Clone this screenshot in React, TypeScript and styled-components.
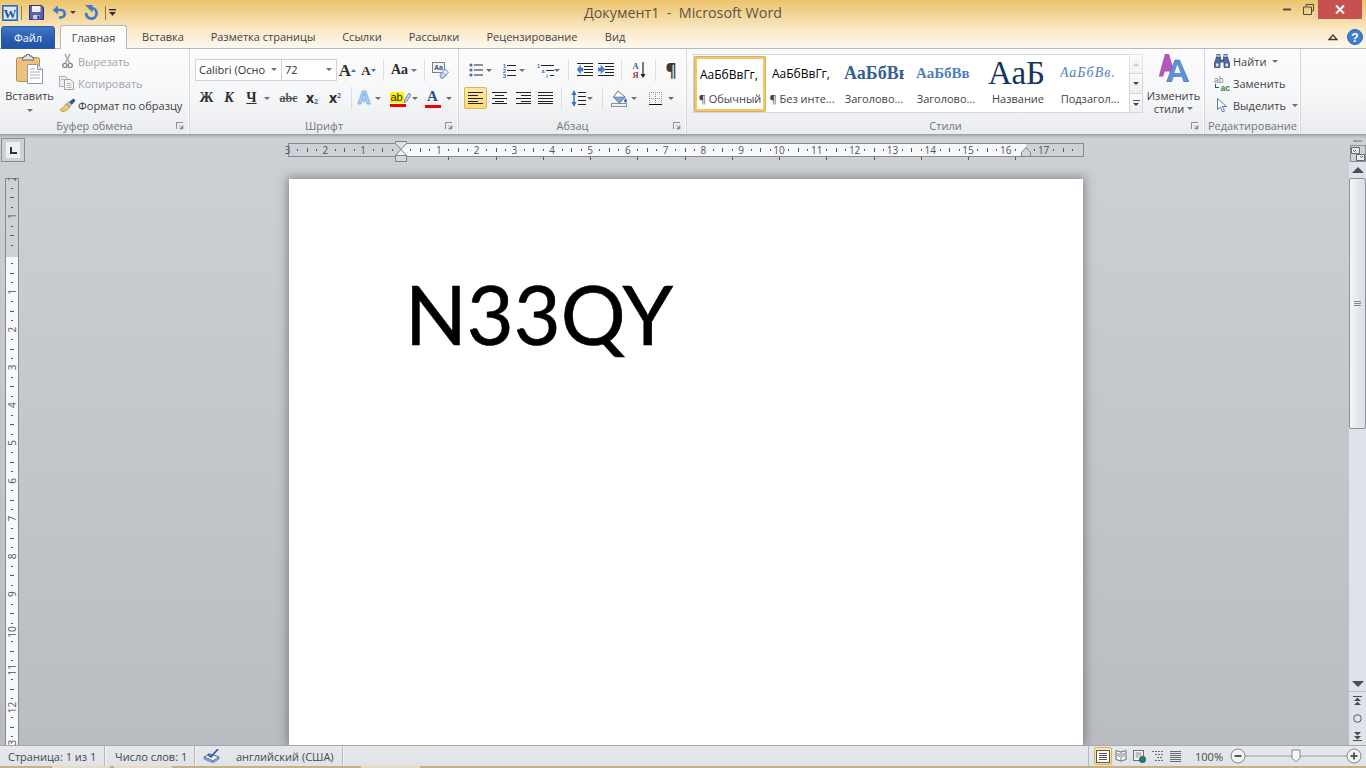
import React from 'react'
import styled, { createGlobalStyle } from 'styled-components'

const UI_FONT = `'Open Sans', 'Noto Sans', sans-serif`
const SERIF = `'Liberation Serif', serif`

const GlobalStyle = createGlobalStyle`
  html, body { margin: 0; padding: 0; overflow: hidden; background: #cdd0d4; }
  body { font: 11px ${UI_FONT}; color: #3c3f44; }
  * { box-sizing: border-box; }
  svg { display: block; flex: none; }
`

const Window = styled.div`
  width: 1366px;
  height: 768px;
  display: flex;
  flex-direction: column;
  overflow: hidden;
`

/* ---------- title bar and tabs ---------- */

const Header = styled.header`
  height: 49px;
  background: linear-gradient(180deg, #edc46c 0%, #f3d596 30%, #fae9c8 62%, #fdf9f1 100%);
`

const TitleBar = styled.div`
  height: 25px;
  display: grid;
  grid-template-columns: 1fr auto 1fr;
  align-items: start;
`

const QuickAccess = styled.div`
  display: flex;
  align-items: center;
  height: 25px;
  padding: 0 0 0 2px;
`

const QatSlot = styled.div<{ $w: number }>`
  width: ${(p) => p.$w}px;
  display: flex;
  align-items: center;
  justify-content: center;
`

const QatRule = styled.div`
  width: 1px;
  height: 14px;
  background: #8d7d5c;
`

const Title = styled.div`
  font-size: 14.3px;
  line-height: 25px;
  color: #5c5548;
  white-space: pre;
`

const WindowButtons = styled.div`
  display: flex;
  justify-content: flex-end;
  padding-right: 4px;
`

const WinButton = styled.div<{ $w: number; $close?: boolean }>`
  width: ${(p) => p.$w}px;
  height: 19px;
  display: flex;
  align-items: center;
  justify-content: center;
  background: ${(p) => (p.$close ? '#c75050' : 'transparent')};
`

const TabStrip = styled.nav`
  height: 24px;
  display: flex;
  align-items: flex-end;
  padding-left: 1px;
  border-bottom: 1px solid #b4b7bb;
`

const FileTab = styled.div`
  width: 54px;
  height: 23px;
  margin-right: 5px;
  margin-bottom: -1px;
  border-radius: 3px 3px 0 0;
  border: 1px solid #2a5a9e;
  background: linear-gradient(180deg, #3f78c8 0%, #2b5cac 55%, #1f54a8 100%);
  color: #fff;
  text-align: center;
  line-height: 22px;
`

const Tab = styled.div<{ $w: number; $active?: boolean }>`
  width: ${(p) => p.$w}px;
  height: ${(p) => (p.$active ? 24 : 23)}px;
  text-align: center;
  line-height: 23px;
  color: #3f4347;
  ${(p) =>
    p.$active &&
    `
    margin-bottom: -1px;
    border: 1px solid #b4b7bb;
    border-bottom: none;
    border-radius: 3px 3px 0 0;
    background: linear-gradient(180deg, #fffdf9 0%, #fbfbfc 100%);
  `}
`

const TabTools = styled.div`
  margin-left: auto;
  height: 23px;
  padding-right: 3px;
  display: flex;
  align-items: center;
  gap: 9px;
`

/* ---------- ribbon ---------- */

const Ribbon = styled.section`
  height: 86px;
  display: flex;
  background: linear-gradient(180deg, #fcfcfd 0%, #f6f7f8 55%, #e9ebee 100%);
  border-bottom: 1px solid #9fa3a8;
`

const Group = styled.div<{ $w: number }>`
  width: ${(p) => p.$w}px;
  display: flex;
  flex-direction: column;
  border-right: 1px solid #d6d8dc;
  box-shadow: inset -1px 0 0 #fbfbfc;
`

const GroupBody = styled.div<{ $pad?: string }>`
  height: 69px;
  display: flex;
  padding: ${(p) => p.$pad ?? '0'};
`

const GroupFooter = styled.div`
  height: 16px;
  display: grid;
  grid-template-columns: 1fr auto 1fr;
  align-items: center;
  color: #72767b;
  line-height: 16px;
`

const LauncherSlot = styled.div`
  justify-self: end;
  padding-right: 5px;
`

const Launcher = () => (
  <LauncherSlot>
    <svg width="8" height="8" viewBox="0 0 8 8">
      <path d="M.5 7V.5H7" fill="none" stroke="#8b8f94" />
      <path d="M3 3l3 3M7 3.5V7H3.5z" fill="#8b8f94" stroke="#8b8f94" strokeWidth=".7" />
    </svg>
  </LauncherSlot>
)

const Caret = styled.i<{ $dark?: boolean }>`
  display: block;
  flex: none;
  width: 0;
  height: 0;
  border-left: 3px solid transparent;
  border-right: 3px solid transparent;
  border-top: 3px solid ${(p) => (p.$dark ? '#444' : '#6d7074')};
`

const PasteBlock = styled.div`
  width: 59px;
  padding-top: 5px;
  display: flex;
  flex-direction: column;
  align-items: center;
  color: #3c3f44;
`

const BigLabel = styled.div`
  margin-top: 4px;
  line-height: 16px;
  margin-bottom: 5px;
`

const ActionList = styled.div<{ $pad?: number }>`
  padding-top: 1px;
  padding-left: ${(p) => p.$pad ?? 0}px;
  display: flex;
  flex-direction: column;
`

const ActionRow = styled.div<{ $off?: boolean }>`
  height: 22px;
  display: flex;
  align-items: center;
  color: ${(p) => (p.$off ? '#a2a5a9' : '#3c3f44')};
  white-space: nowrap;
`

const ActionIcon = styled.div<{ $w: number }>`
  width: ${(p) => p.$w}px;
  flex: none;
  display: flex;
`

const ActionCaret = styled.div`
  margin-left: 6px;
`

const ToolRows = styled.div`
  padding-top: 9px;
  display: flex;
  flex-direction: column;
  gap: 4px;
`

const ToolRow = styled.div`
  height: 24px;
  display: flex;
  align-items: center;
`

const Combo = styled.div<{ $w: number }>`
  width: ${(p) => p.$w}px;
  height: 22px;
  margin-right: -1px;
  padding: 0 4px 1px 3px;
  display: flex;
  align-items: center;
  justify-content: space-between;
  background: #fff;
  border: 1px solid #cfd2d6;
  color: #2f3236;
  white-space: nowrap;
  overflow: hidden;
`

const Tool = styled.div<{ $w: number; $gap?: number }>`
  width: ${(p) => p.$w}px;
  flex: none;
  height: 24px;
  display: flex;
  align-items: center;
  justify-content: center;
  gap: ${(p) => p.$gap ?? 3}px;
`

const ActiveTool = styled.div<{ $w: number; $h: number }>`
  width: ${(p) => p.$w}px;
  height: ${(p) => p.$h}px;
  flex: none;
  display: flex;
  align-items: center;
  justify-content: center;
  border: 1px solid #dfb35a;
  border-radius: 2px;
  background: linear-gradient(180deg, #fde8a8 0%, #fedb78 100%);
`

const Gap = styled.div<{ $w: number }>`
  width: ${(p) => p.$w}px;
  flex: none;
`

const ToolRule = styled.div`
  width: 1px;
  height: 22px;
  flex: none;
  background: #dcdee1;
`

const Glyph = styled.span<{ $size: number; $color?: string; $serif?: boolean; $bold?: boolean; $italic?: boolean; $line?: string }>`
  font-family: ${(p) => (p.$serif ? SERIF : UI_FONT)};
  font-size: ${(p) => p.$size}px;
  font-weight: ${(p) => (p.$bold ? 700 : 400)};
  font-style: ${(p) => (p.$italic ? 'italic' : 'normal')};
  color: ${(p) => p.$color ?? '#2b2d30'};
  text-decoration: ${(p) => p.$line ?? 'none'};
  line-height: 1;
`

const SubMark = styled.sub`
  font-size: 7px;
  color: #3f6fb5;
  font-weight: 700;
  vertical-align: -1px;
  line-height: 0;
`

const SupMark = styled.sup`
  font-size: 7px;
  color: #3f6fb5;
  font-weight: 700;
  vertical-align: 5px;
  line-height: 0;
`

const GlowA = styled.span`
  font: 700 18px 'Liberation Sans', sans-serif;
  color: #a9d0f2;
  -webkit-text-stroke: 0.5px #5c9ad8;
  text-shadow: 0 0 3px #a9d3f5;
  line-height: 1;
`

const ColorStack = styled.div`
  display: flex;
  flex-direction: column;
  align-items: center;
  width: 17px;
`

const ColorBar = styled.div`
  width: 16px;
  height: 3px;
  margin-top: 1px;
  background: #f00000;
`

const HighlightText = styled.span`
  font: 11px 'Liberation Sans', sans-serif;
  line-height: 11px;
  padding: 0 1px;
  background: #fff200;
  color: #222;
`

const HighlightRow = styled.div`
  display: flex;
  align-items: flex-end;
  height: 13px;
  width: 17px;
`

/* ---------- style gallery ---------- */

const Gallery = styled.div`
  margin: 5px 0 0 6px;
  width: 450px;
  height: 59px;
  display: flex;
`

const GalleryItems = styled.div`
  width: 436px;
  height: 59px;
  background: #fff;
  border: 1px solid #d3d6da;
  border-right: none;
  display: flex;
  align-items: center;
`

const StyleItem = styled.div<{ $selected?: boolean }>`
  width: 72px;
  height: 56px;
  flex: none;
  overflow: hidden;
  display: flex;
  flex-direction: column;
  align-items: center;
  color: #3f4347;
  ${(p) =>
    p.$selected &&
    `
    border: 3px solid #f3c766;
    outline: 1px solid #dcb05a;
    outline-offset: -1px;
    border-radius: 2px;
  `}
`

const Preview = styled.div<{ $selected?: boolean }>`
  height: ${(p) => (p.$selected ? 32 : 35)}px;
  width: 60px;
  overflow: hidden;
  white-space: nowrap;
  display: flex;
  align-items: center;
`

const PreviewText = styled.span<{ $f?: string; $size: number; $color?: string; $bold?: boolean; $italic?: boolean; $ls?: number }>`
  font-family: ${(p) => p.$f ?? UI_FONT};
  font-size: ${(p) => p.$size}px;
  color: ${(p) => p.$color ?? '#000'};
  font-weight: ${(p) => (p.$bold ? 700 : 400)};
  font-style: ${(p) => (p.$italic ? 'italic' : 'normal')};
  letter-spacing: ${(p) => p.$ls ?? 0}px;
`

const StyleName = styled.div`
  line-height: 16px;
  white-space: nowrap;
`

const GalleryScroll = styled.div`
  width: 14px;
  display: flex;
  flex-direction: column;
`

const GalleryButton = styled.div<{ $faded?: boolean }>`
  flex: 1;
  display: flex;
  flex-direction: column;
  gap: 2px;
  align-items: center;
  justify-content: center;
  border: 1px solid #d3d6da;
  margin-top: -1px;
  background: linear-gradient(180deg, #fbfbfc, #eceef1);
  &:first-child { margin-top: 0; }
  opacity: ${(p) => (p.$faded ? 0.6 : 1)};
`

const UpCaret = styled(Caret)`
  border-top: none;
  border-bottom: 3px solid #a7aaae;
`

const BarMark = styled.i`
  display: block;
  width: 7px;
  height: 1px;
  background: #55585c;
`

const ChangeStyles = styled.div`
  flex: 1;
  padding-top: 5px;
  display: flex;
  flex-direction: column;
  align-items: center;
  line-height: 13px;
  text-align: center;
`

const ChangeLine = styled.div`
  display: flex;
  align-items: center;
  gap: 3px;
`

const ChangeFirst = styled.div`
  margin-top: 7px;
`

/* ---------- workspace ---------- */

const Workspace = styled.main`
  flex: 1;
  min-height: 0;
  display: flex;
  background: linear-gradient(180deg, #cdd0d4 0%, #b9bcc0 100%);
  box-shadow: inset 0 3px 3px -2px rgba(60, 65, 70, 0.35);
`

const LeftRail = styled.aside`
  width: 24px;
  flex: none;
  display: flex;
  flex-direction: column;
  padding: 3px 0 0 1px;
`

const TabStopButton = styled.div`
  width: 24px;
  height: 24px;
  padding: 3px 4px;
  border: 1px solid #8a8f95;
  background: #cdd0d4;
`

const TabStopFace = styled.div`
  width: 14px;
  height: 16px;
  background: #eef0f2;
  display: flex;
  align-items: center;
  justify-content: center;
`

const VRulerBox = styled.div`
  margin: 16px 0 0 4px;
`

const RulerSvg = styled.svg`
  overflow: visible;
`

const Pane = styled.div`
  flex: 1;
  min-width: 0;
  padding: 6px 1px 0 0;
  display: flex;
  flex-direction: column;
  align-items: center;
  overflow: hidden;
`

const Page = styled.article`
  width: 794px;
  flex: 1;
  margin-top: 17px;
  padding: 83px 0 0 116px;
  background: #fff;
  box-shadow: 0 0 9px 2px rgba(70, 75, 82, 0.5);
`

const PageText = styled.div`
  font-family: Lato, sans-serif;
  font-size: 81px;
  line-height: 104px;
  color: #000;
  -webkit-text-stroke: 0.6px #000;
`

const ScrollRail = styled.aside`
  width: 17px;
  flex: none;
  display: flex;
  flex-direction: column;
  align-items: stretch;
  padding-top: 3px;
`

const RailGrip = styled.div`
  width: 9px;
  height: 2px;
  margin: 2px auto 3px;
  background: #9a9ea3;
`

const RulerToggle = styled.div`
  height: 17px;
  margin-left: 1px;
  border: 1px solid #8a8f95;
  display: flex;
  align-items: center;
  justify-content: center;
`

const RailButton = styled.div<{ $h: number; $line?: boolean }>`
  height: ${(p) => p.$h}px;
  display: flex;
  align-items: center;
  justify-content: center;
  background: #dfe2e9;
  ${(p) => p.$line && 'border-bottom: 1px solid #bfc2c7;'}
`

const Track = styled.div`
  flex: 1;
  display: flex;
  flex-direction: column;
  background: #dfe2e9;
`

const Thumb = styled.div`
  height: 251px;
  border: 1px solid #8d9298;
  border-radius: 2px;
  background: linear-gradient(90deg, #f4f5f7 0%, #e4e6eb 60%, #dcdfe5 100%);
  display: flex;
  align-items: center;
  justify-content: center;
`

const ThumbGrip = styled.div`
  width: 7px;
  height: 5px;
  border-top: 1px solid #85898e;
  border-bottom: 1px solid #85898e;
  background: linear-gradient(#85898e, #85898e) center / 100% 1px no-repeat;
`

const ArrowMark = styled.i<{ $down?: boolean }>`
  display: block;
  width: 0;
  height: 0;
  border-left: 6px solid transparent;
  border-right: 6px solid transparent;
  ${(p) => (p.$down ? 'border-top: 6px solid #4a4d52;' : 'border-bottom: 6px solid #4a4d52;')}
`

/* ---------- status bar ---------- */

const StatusBar = styled.footer`
  height: 21px;
  flex: none;
  display: flex;
  align-items: center;
  border-top: 1px solid #a4a7ac;
  background: linear-gradient(180deg, #e6e8ec 0%, #dfe2e6 100%);
  color: #45484d;
`

const StatusCell = styled.div<{ $w: number; $pad: number }>`
  width: ${(p) => p.$w}px;
  height: 20px;
  padding-left: ${(p) => p.$pad}px;
  display: flex;
  align-items: center;
  white-space: nowrap;
  border-right: 1px solid #b3b6ba;
  box-shadow: 1px 0 0 #f3f4f6;
`

const StatusRight = styled.div`
  margin-left: auto;
  display: flex;
  align-items: center;
  height: 20px;
`

const StatusRule = styled.div`
  width: 1px;
  height: 20px;
  margin-right: 5px;
  background: #b3b6ba;
`

const ViewSlot = styled.div<{ $w: number }>`
  width: ${(p) => p.$w}px;
  display: flex;
  justify-content: center;
`

const ZoomValue = styled.div`
  width: 45px;
  text-align: right;
  padding-right: 7px;
`

const TaskSliver = styled.div`
  height: 2px;
  flex: none;
  background: linear-gradient(
    90deg,
    #c7b083 0 52px,
    #e6dcc4 52px 110px,
    #c7b083 110px 114px,
    #e6dcc4 114px 172px,
    #c7b083 172px 361px,
    #e6dcc4 361px 420px,
    #c7b083 420px
  );
`

/* ---------- drawings ---------- */

const WordLogo = () => (
  <svg width="16" height="16" viewBox="0 0 16 16">
    <rect x=".5" y=".5" width="15" height="15" fill="#fff" stroke="#2f6cb8" />
    <rect x="1.5" y="1.5" width="13" height="13" fill="#dce9f7" stroke="#5f98d8" />
    <text x="8" y="13" textAnchor="middle" fontFamily="Liberation Serif" fontWeight="700" fontSize="13" fill="#1c4f9c">W</text>
  </svg>
)

const SaveIcon = () => (
  <svg width="15" height="15" viewBox="0 0 15 15">
    <path d="M.5.5h12l2 2v12H.5z" fill="#5d60ad" stroke="#2f3178" />
    <rect x="3" y="1" width="8.5" height="6" fill="#eef0fa" />
    <rect x="3.5" y="9.5" width="8" height="5" fill="#c9cbe0" stroke="#3b3d85" strokeWidth=".6" />
    <rect x="8.5" y="10.5" width="2" height="3.5" fill="#2f3178" />
  </svg>
)

const UndoIcon = () => (
  <svg width="14" height="15" viewBox="0 0 14 15">
    <path d="M4 5h5a3.5 3.5 0 0 1 0 7.5H7" fill="none" stroke="#3c7bc8" strokeWidth="2.6" />
    <path d="M6 .5v9L.5 5z" fill="#3c7bc8" />
  </svg>
)

const RedoIcon = () => (
  <svg width="14" height="15" viewBox="0 0 14 15">
    <path d="M8 3.200A5.200 5.200 0 1 1 2.200 8" fill="none" stroke="#3c7bc8" strokeWidth="2.800" />
    <path d="M1 0h7.500v7.500z" fill="#3c7bc8" />
  </svg>
)

const CustomizeIcon = () => (
  <svg width="7" height="7" viewBox="0 0 7 7">
    <rect y="0" width="7" height="1.4" fill="#2b2b2b" />
    <path d="M0 3h7L3.5 6.8z" fill="#2b2b2b" />
  </svg>
)

const PasteIcon = () => (
  <svg width="28" height="30" viewBox="0 0 28 30">
    <rect x=".5" y="3.5" width="23" height="24" rx="2" fill="#eec27c" stroke="#b58c50" />
    <path d="M8 3.5V2h2.5V.5h3V2H16v1.5h1.5V6h-11V3.5z" fill="#e3e4e6" stroke="#6b6d70" />
    <path d="M11.5 10.5h10l5 5v14h-15z" fill="#fff" stroke="#8d97a6" />
    <path d="M21.5 10.5v5h5" fill="#dfe4ea" stroke="#8d97a6" />
    <path d="M14 15h5M14 18h10M14 21h10M14 24h10" stroke="#a6aeba" />
  </svg>
)

const CutIcon = () => (
  <svg width="11" height="16" viewBox="0 0 11 16">
    <path d="M3 1l4.5 9M8 1L3.5 10" stroke="#a8abaf" strokeWidth="1.6" />
    <circle cx="2.8" cy="12.5" r="2.1" fill="none" stroke="#85888c" strokeWidth="1.4" />
    <circle cx="8.2" cy="12.5" r="2.1" fill="none" stroke="#85888c" strokeWidth="1.4" />
  </svg>
)

const CopyIcon = () => (
  <svg width="15" height="14" viewBox="0 0 15 14">
    <path d="M.5.5h6l2 2v8h-8z" fill="#eceef0" stroke="#a9acb0" />
    <path d="M5.5 3.5h6l3 3v7h-9z" fill="#f5f6f7" stroke="#a0a3a7" />
    <path d="M7.5 7.5h5M7.5 9.5h5M7.5 11.5h5M2 3.5h3" stroke="#b6b9bd" />
  </svg>
)

const BrushIcon = () => (
  <svg width="17" height="14" viewBox="0 0 17 14">
    <path d="M1 11.5C4 11 5 8 7 6l4 3c-2 2-4 4.500-8 4.500z" fill="#f0cd6a" stroke="#a48a3c" strokeWidth=".8" />
    <path d="M7.500 5.500l2-1.500 3 2.500-1.500 2z" fill="#c7cbd1" stroke="#777" strokeWidth=".6" />
    <path d="M10 4l4.500-3.500 2 2L13 6.500z" fill="#34518f" />
  </svg>
)

const GrowArrow = ({ color = '#3f6fb5', down }: { color?: string; down?: boolean }) => (
  <svg width="5" height="3" viewBox="0 0 5 3">
    <path d={down ? 'M0 0h5L2.500 3z' : 'M0 3h5L2.500 0z'} fill={color} />
  </svg>
)

const ClearFormatIcon = () => (
  <svg width="17" height="17" viewBox="0 0 17 17">
    <rect x=".5" y=".5" width="12" height="10" fill="#f4f5f7" stroke="#7d8085" />
    <text x="6.500" y="8" textAnchor="middle" fontSize="7" fontFamily="Liberation Sans" fontWeight="700" fill="#3a4c78">Aa</text>
    <path d="M8 13l5-6 3.500 3-5 6H9z" fill="#e8f0fa" stroke="#6d90bf" />
    <path d="M8 13l2.500-3 3.500 3-2.500 3H9z" fill="#bcd3ef" stroke="#6d90bf" strokeWidth=".7" />
  </svg>
)

const HighlightPen = () => (
  <svg width="7" height="10" viewBox="0 0 7 10">
    <path d="M5 0l2 2-4 6-3 2 .5-3.500z" fill="#b9c9dd" stroke="#5c7190" strokeWidth=".7" />
  </svg>
)

const Lines = ({ rows, width = 14 }: { rows: Array<[number, number]>; width?: number }) => (
  <svg width={width} height="13" viewBox={`0 0 ${width} 13`}>
    {rows.map(([x1, x2], i) => (
      <rect key={i} x={x1} y={i * (12 / (rows.length - 1)) - (i === rows.length - 1 ? 1 : 0)} width={x2 - x1} height="1" fill="#222" />
    ))}
  </svg>
)

const BulletsIcon = () => (
  <svg width="14" height="14" viewBox="0 0 14 14">
    {[2, 7, 12].map((y) => (
      <g key={y}>
        <circle cx="2" cy={y} r="1.600" fill="#3b6fb6" />
        <rect x="5" y={y - 0.5} width="9" height="1" fill="#222" />
      </g>
    ))}
  </svg>
)

const NumbersIcon = () => (
  <svg width="14" height="15" viewBox="0 0 14 15">
    {[1, 2, 3].map((n) => (
      <g key={n}>
        <text x="2.500" y={n * 5 - 0.5} textAnchor="middle" fontSize="6" fontWeight="700" fontFamily="Liberation Sans" fill="#3b6fb6">{n}</text>
        <rect x="5" y={n * 5 - 3} width="9" height="1" fill="#222" />
      </g>
    ))}
  </svg>
)

const MultiLevelIcon = () => (
  <svg width="17" height="15" viewBox="0 0 17 15">
    <text x="1.500" y="5" textAnchor="middle" fontSize="5.500" fontWeight="700" fontFamily="Liberation Sans" fill="#3b6fb6">1</text>
    <rect x="4" y="2" width="13" height="1" fill="#222" />
    <text x="6" y="10" textAnchor="middle" fontSize="5.500" fontWeight="700" fontFamily="Liberation Sans" fill="#3b6fb6">a</text>
    <rect x="9" y="7" width="8" height="1" fill="#222" />
    <text x="10" y="15" textAnchor="middle" fontSize="5.500" fontWeight="700" fontFamily="Liberation Sans" fill="#3b6fb6">i</text>
    <rect x="13" y="12" width="4" height="1" fill="#222" />
  </svg>
)

const IndentIcon = ({ increase }: { increase?: boolean }) => (
  <svg width="16" height="14" viewBox="0 0 16 14">
    <path d="M0 .5h16M7 3.500h9M7 6.500h9M7 9.500h9M0 12.500h16" stroke="#222" />
    <path
      d={increase ? 'M0 5h3V2.500L7 6.500l-4 4V8H0z' : 'M6 5H3.500V2.500L0 6.500l3.500 4V8H6z'}
      fill="#4a82cc"
      stroke="#2f5c9e"
      strokeWidth=".5"
    />
  </svg>
)

const SortIcon = () => (
  <svg width="15" height="17" viewBox="0 0 15 17">
    <text x="4.500" y="7" textAnchor="middle" fontSize="8.500" fontWeight="700" fontFamily="Liberation Serif" fill="#3b5e9a">А</text>
    <text x="4.500" y="16" textAnchor="middle" fontSize="8.500" fontWeight="700" fontFamily="Liberation Serif" fill="#a13c3c">Я</text>
    <path d="M12 0v14" stroke="#222" strokeWidth="1.200" />
    <path d="M9.500 12h5L12 16z" fill="#222" />
  </svg>
)

const LineSpacingIcon = () => (
  <svg width="15" height="17" viewBox="0 0 15 17">
    <path d="M3 3v11" stroke="#3b6fb6" strokeWidth="1.500" />
    <path d="M.5 5L3 0l2.500 5zM.5 12L3 17l2.500-5z" fill="#3b6fb6" />
    <path d="M7 2.500h8M7 6.500h8M7 10.500h8M7 14.500h8" stroke="#222" />
  </svg>
)

const ShadingIcon = () => (
  <svg width="17" height="17" viewBox="0 0 17 17">
    <path d="M7 1l7 6-5.500 6L2.500 7z" fill="#fff" stroke="#6c7077" />
    <path d="M14 7l-5.500 6-6-6z" fill="#7fa7da" stroke="#50709b" strokeWidth=".6" />
    <path d="M14.500 8s1.500 2 1.500 3a1.500 1.500 0 0 1-3 0c0-1 1.500-3 1.500-3z" fill="#3b6fb6" />
    <rect x=".5" y="13.500" width="15" height="3" fill="#eef0f3" stroke="#8c9095" />
  </svg>
)

const BordersIcon = () => (
  <svg width="13" height="13" viewBox="0 0 13 13">
    <path d="M.5 0v12M6.500 0v12M12.500 0v12M0 .5h13M0 6.500h13" stroke="#8a8d92" strokeDasharray="1 1" />
    <rect y="12" width="13" height="1" fill="#111" />
  </svg>
)

const ChangeStylesIcon = () => (
  <svg width="32" height="28" viewBox="0 0 32 28">
    <path d="M10 0h5l9 26h-5.500l-2-6H9l-2 6H1.500z" fill="#b558b8" stroke="#8e3d96" strokeWidth=".5" transform="scale(.72 .86)" />
    <path d="M17 6h4.500L31 28h-5l-1.800-5.500h-9L13.500 28h-5z" fill="#5d93d8" stroke="#3c6fb3" strokeWidth=".6" />
    <path d="M19.300 10.500L16.500 19h6z" fill="#fbfbfc" />
  </svg>
)

const BinocularsIcon = () => (
  <svg width="16" height="14" viewBox="0 0 16 14">
    <path d="M2.500 3h4v3h3V3h4l2 6v4.500H10V8H6v5.500H.5V9z" fill="#4a6ba5" stroke="#26406e" strokeWidth=".7" />
    <rect x="3" y=".5" width="3" height="3" fill="#cfd9ea" stroke="#26406e" strokeWidth=".7" />
    <rect x="10" y=".5" width="3" height="3" fill="#cfd9ea" stroke="#26406e" strokeWidth=".7" />
    <rect x="2" y="9.500" width="2.500" height="3" fill="#dce5f3" />
    <rect x="11.500" y="9.500" width="2.500" height="3" fill="#dce5f3" />
  </svg>
)

const ReplaceIcon = () => (
  <svg width="17" height="15" viewBox="0 0 17 15">
    <text x="0" y="6.500" fontSize="8.500" fontFamily="Liberation Sans" fill="#7f8287">ab</text>
    <text x="6.500" y="14.500" fontSize="8.500" fontWeight="700" fontFamily="Liberation Sans" fill="#3f7d3b">ac</text>
    <path d="M1.500 8v3.500H5" fill="none" stroke="#24509a" strokeWidth="1.100" />
  </svg>
)

const SelectIcon = () => (
  <svg width="11" height="15" viewBox="0 0 11 15">
    <path d="M.5.500v11l3-2.500 2 5 2-1-2-4.500h4z" fill="#fff" stroke="#5a7bab" />
  </svg>
)

const CheckBookIcon = () => (
  <svg width="17" height="14" viewBox="0 0 17 14">
    <path d="M1 8l6-3 9 3-6 4z" fill="#eef1f7" stroke="#4d6da6" />
    <path d="M1 8v2l9 4 6-4V8l-6 4z" fill="#8ea8d6" stroke="#4d6da6" strokeWidth=".6" />
    <path d="M5 5l3 3 7-8" fill="none" stroke="#2f5fa8" strokeWidth="1.800" />
  </svg>
)

const Chevrons = () => (
  <svg width="10" height="8" viewBox="0 0 10 8">
    <path d="M1 6.500L5 2l4 4.500H1z" fill="none" stroke="#3a3a3a" strokeWidth="1.300" />
  </svg>
)

const HelpIcon = () => (
  <svg width="16" height="16" viewBox="0 0 16 16">
    <circle cx="8" cy="8" r="7.500" fill="#3d7fd0" stroke="#2b64ad" />
    <text x="8" y="12.500" textAnchor="middle" fontFamily="Liberation Sans" fontWeight="700" fontSize="12" fill="#fff">?</text>
  </svg>
)

const PrintLayoutIcon = () => (
  <svg width="14" height="13" viewBox="0 0 14 13">
    <rect x=".5" y=".5" width="13" height="12" fill="#fdfdfd" stroke="#55585d" />
    <path d="M3 3.500h8M3 5.500h8M3 7.500h8M3 9.500h8" stroke="#55585d" />
  </svg>
)

const ReadingIcon = () => (
  <svg width="12" height="13" viewBox="0 0 12 13">
    <path d="M6 2L1 .5v9L6 11l5-1.500v-9z" fill="#f6f7f9" stroke="#6a6d72" />
    <path d="M6 2v9M2 3.500l3 .8M2 5.500l3 .8M7 4.300l3-.8M7 6.300l3-.8" stroke="#6a6d72" strokeWidth=".8" />
  </svg>
)

const WebIcon = () => (
  <svg width="13" height="13" viewBox="0 0 13 13">
    <rect x=".5" y=".5" width="10" height="10" fill="#f6f7f9" stroke="#6a6d72" />
    <path d="M2.500 3h6M2.500 5h6M2.500 7h3" stroke="#6a6d72" strokeWidth=".8" />
    <circle cx="9.500" cy="9.500" r="3.200" fill="#2f7d4f" stroke="#1d5a9c" strokeWidth=".8" />
  </svg>
)

const OutlineIcon = () => (
  <svg width="11" height="11" viewBox="0 0 11 11">
    <path d="M0 .5h11M3 3.500h8M5 6.500h6M3 9.500h8" stroke="#6a6d72" strokeDasharray="2 1" />
  </svg>
)

const DraftIcon = () => (
  <svg width="11" height="11" viewBox="0 0 11 11">
    <path d="M0 .5h11M0 2.500h11M0 4.500h11M0 6.500h11M0 8.500h11M0 10.500h11" stroke="#6a6d72" />
  </svg>
)

const ZoomSlider = () => (
  <svg width="132" height="18" viewBox="0 0 132 18">
    <path d="M15 9h102" stroke="#9da1a6" />
    <circle cx="8" cy="9" r="7" fill="#f3f4f6" stroke="#7f8388" />
    <rect x="4.500" y="8" width="7" height="2" fill="#55585d" />
    <circle cx="124" cy="9" r="7" fill="#f3f4f6" stroke="#7f8388" />
    <path d="M120.500 9h7M124 5.500v7" stroke="#55585d" strokeWidth="2" />
    <path d="M62 3h8v8l-4 4-4-4z" fill="#f7f8f9" stroke="#85898e" />
  </svg>
)

const RulerToggleIcon = () => (
  <svg width="14" height="14" viewBox="0 0 14 14">
    <path d="M.5.500h8v6h-8zM5.500 7.500h8v6h-8z" fill="#e9ebef" stroke="#65696e" />
    <path d="M2 3l2 2M9 9l2 2M4 3l1 1M11 9l1 1" stroke="#65696e" />
  </svg>
)

const PrevNextIcon = ({ down }: { down?: boolean }) => (
  <svg width="9" height="9" viewBox="0 0 9 9">
    <rect x="0" y={down ? 8 : 0} width="9" height="1" fill="#4a4d52" />
    <path d={down ? 'M1 0h7L4.500 3.500zM1 4h7L4.500 7.500z' : 'M1 5h7L4.500 1.500zM1 9h7L4.500 5.500z'} fill="#4a4d52" />
  </svg>
)

/* ---------- rulers ---------- */

const CM = 37.8
const HRULER_W = 796
const ZERO_X = 113
const RIGHT_X = 738
const VRULER_H = 567
const ZERO_Y = 76

const range = (from: number, to: number) => Array.from({ length: to - from + 1 }, (_, i) => from + i)

const HorizontalRuler = () => (
  <RulerSvg width={HRULER_W} height="21" viewBox={`0 0 ${HRULER_W} 21`}>
    <rect x=".5" y="2.500" width={HRULER_W - 1} height="13" fill="#ced1d5" stroke="#868a90" />
    <rect x={ZERO_X} y="3" width={RIGHT_X - ZERO_X} height="12" fill="#f7f8f9" />
    {range(-3, 18).map((k) => (
      <g key={k}>
        {[0.25, 0.75].map((q) => {
          const x = ZERO_X + (k + q) * CM
          return x > 0 && x < HRULER_W ? <rect key={q} x={Math.round(x)} y="8" width="1" height="2" fill="#55585d" /> : null
        })}
        {ZERO_X + (k + 0.5) * CM > 0 && ZERO_X + (k + 0.5) * CM < HRULER_W && (
          <rect x={Math.round(ZERO_X + (k + 0.5) * CM)} y="7" width="1" height="4" fill="#55585d" />
        )}
        {k !== 0 && k <= 17 && (
          <text x={ZERO_X + k * CM} y="13" textAnchor="middle" fontFamily="Open Sans" fontSize="10" fill="#50545c">
            {Math.abs(k)}
          </text>
        )}
      </g>
    ))}
    {range(1, 13).map((n) => (
      <rect key={n} x={Math.round(ZERO_X + n * 47.25)} y="16" width="1" height="3" fill="#55585d" />
    ))}
    <path d="M107.500.500h11v2L113 8.500l-5.500-6z" fill="#dfe1e4" stroke="#7d8187" />
    <path d="M113 8.500l5.500 6h-11z" fill="#f1f2f4" stroke="#7d8187" />
    <rect x="107.500" y="14.500" width="11" height="6" fill="#d6d8dc" stroke="#7d8187" />
    <path d="M733.500 15.500v-4l4.500-5 4.500 5v4z" fill="#d3d5d9" stroke="#7d8187" />
  </RulerSvg>
)

const VerticalRuler = () => (
  <svg width="15" height={VRULER_H} viewBox={`0 0 15 ${VRULER_H}`}>
    <rect x=".5" y=".5" width="13" height={VRULER_H} fill="#ced1d5" stroke="#868a90" />
    <rect x="1" y={ZERO_Y + 3} width="12" height={VRULER_H} fill="#f7f8f9" />
    {range(-2, 14).map((k) => (
      <g key={k}>
        {[0.25, 0.75].map((q) => {
          const y = ZERO_Y + (k + q) * CM
          return y > 0 ? <rect key={q} x="6" y={Math.round(y)} width="2" height="1" fill="#55585d" /> : null
        })}
        {ZERO_Y + (k + 0.5) * CM > 0 && <rect x="5" y={Math.round(ZERO_Y + (k + 0.5) * CM)} width="4" height="1" fill="#55585d" />}
        {k !== 0 && (
          <text
            transform={`translate(11 ${ZERO_Y + k * CM}) rotate(-90)`}
            textAnchor="middle"
            fontFamily="Open Sans"
            fontSize="10"
            fill="#50545c"
          >
            {Math.abs(k)}
          </text>
        )}
      </g>
    ))}
  </svg>
)

/* ---------- data ---------- */

const tabs: Array<[string, number]> = [
  ['Вставка', 72],
  ['Разметка страницы', 128],
  ['Ссылки', 70],
  ['Рассылки', 74],
  ['Рецензирование', 122],
  ['Вид', 44],
]

const groupLabel = (label: string, launcher = true) => (
  <GroupFooter>
    <span />
    <span>{label}</span>
    {launcher ? <Launcher /> : <span />}
  </GroupFooter>
)

const App = () => {
  return (
    <Window>
      <GlobalStyle />
      <Header>
        <TitleBar>
          <QuickAccess>
            <WordLogo />
            <Gap $w={3} />
            <QatRule />
            <Gap $w={7} />
            <SaveIcon />
            <Gap $w={8} />
            <UndoIcon />
            <QatSlot $w={14}>
              <Caret $dark />
            </QatSlot>
            <Gap $w={4} />
            <RedoIcon />
            <Gap $w={7} />
            <QatRule />
            <Gap $w={3} />
            <CustomizeIcon />
          </QuickAccess>
          <Title>Документ1  -  Microsoft Word</Title>
          <WindowButtons>
            <WinButton $w={25}>
              <svg width="8" height="3" viewBox="0 0 8 3">
                <rect width="8" height="2" y=".5" fill="#4e4a42" />
              </svg>
            </WinButton>
            <WinButton $w={19}>
              <svg width="11" height="11" viewBox="0 0 11 11">
                <path d="M3 2.500V.5h7.500V7H8.500M.5 3h8v7.500h-8z" fill="none" stroke="#4e4a42" />
              </svg>
            </WinButton>
            <WinButton $w={44} $close>
              <svg width="10" height="9" viewBox="0 0 10 9">
                <path d="M1 .5l8 8M9 .5l-8 8" stroke="#fff" strokeWidth="2" />
              </svg>
            </WinButton>
          </WindowButtons>
        </TitleBar>
        <TabStrip>
          <FileTab>Файл</FileTab>
          <Tab $w={67} $active>
            Главная
          </Tab>
          {tabs.map(([label, w]) => (
            <Tab key={label} $w={w}>
              {label}
            </Tab>
          ))}
          <TabTools>
            <Chevrons />
            <HelpIcon />
          </TabTools>
        </TabStrip>
      </Header>

      <Ribbon>
        <Group $w={190}>
          <GroupBody>
            <PasteBlock>
              <PasteIcon />
              <BigLabel>Вставить</BigLabel>
              <Caret />
            </PasteBlock>
            <ActionList>
              <ActionRow $off>
                <ActionIcon $w={19}>
                  <Gap $w={3} />
                  <CutIcon />
                </ActionIcon>
                Вырезать
              </ActionRow>
              <ActionRow $off>
                <ActionIcon $w={19}>
                  <CopyIcon />
                </ActionIcon>
                Копировать
              </ActionRow>
              <ActionRow>
                <ActionIcon $w={19}>
                  <BrushIcon />
                </ActionIcon>
                Формат по образцу
              </ActionRow>
            </ActionList>
          </GroupBody>
          {groupLabel('Буфер обмена')}
        </Group>

        <Group $w={269}>
          <GroupBody $pad="0 0 0 5px">
            <ToolRows>
              <ToolRow>
                <Combo $w={87}>
                  Calibri (Осно
                  <Caret />
                </Combo>
                <Combo $w={56}>
                  72
                  <Caret />
                </Combo>
                <Gap $w={1} />
                <Tool $w={21} $gap={0}>
                  <Glyph $size={17} $serif $bold>
                    A
                  </Glyph>
                  <GrowArrow />
                </Tool>
                <Tool $w={21} $gap={0}>
                  <Glyph $size={13} $serif $bold>
                    A
                  </Glyph>
                  <GrowArrow down />
                </Tool>
                <Gap $w={4} />
                <ToolRule />
                <Tool $w={40}>
                  <Glyph $size={14} $serif $bold>
                    Aa
                  </Glyph>
                  <Caret />
                </Tool>
                <ToolRule />
                <Tool $w={31}>
                  <ClearFormatIcon />
                </Tool>
              </ToolRow>
              <ToolRow>
                <Tool $w={23}>
                  <Glyph $size={14} $serif $bold>
                    Ж
                  </Glyph>
                </Tool>
                <Tool $w={22}>
                  <Glyph $size={14} $serif $bold $italic>
                    К
                  </Glyph>
                </Tool>
                <Tool $w={36} $gap={7}>
                  <Glyph $size={14} $serif $bold $line="underline">
                    Ч
                  </Glyph>
                  <Caret />
                </Tool>
                <Tool $w={25}>
                  <Glyph $size={12} $serif $bold $color="#555" $line="line-through">
                    abc
                  </Glyph>
                </Tool>
                <Tool $w={22}>
                  <Glyph $size={14} $bold>
                    x<SubMark>2</SubMark>
                  </Glyph>
                </Tool>
                <Tool $w={24}>
                  <Glyph $size={14} $bold>
                    x<SupMark>2</SupMark>
                  </Glyph>
                </Tool>
                <Gap $w={4} />
                <ToolRule />
                <Tool $w={34} $gap={4}>
                  <GlowA>A</GlowA>
                  <Caret />
                </Tool>
                <Tool $w={35} $gap={5}>
                  <ColorStack>
                    <HighlightRow>
                      <HighlightText>ab</HighlightText>
                      <HighlightPen />
                    </HighlightRow>
                    <ColorBar />
                  </ColorStack>
                  <Caret />
                </Tool>
                <Tool $w={34} $gap={5}>
                  <ColorStack>
                    <Glyph $size={15} $serif $bold $color="#2f4d8c">
                      A
                    </Glyph>
                    <ColorBar />
                  </ColorStack>
                  <Caret />
                </Tool>
              </ToolRow>
            </ToolRows>
          </GroupBody>
          {groupLabel('Шрифт')}
        </Group>

        <Group $w={228}>
          <GroupBody $pad="0 0 0 5px">
            <ToolRows>
              <ToolRow>
                <Tool $w={32}>
                  <BulletsIcon />
                  <Caret />
                </Tool>
                <Tool $w={35}>
                  <NumbersIcon />
                  <Caret />
                </Tool>
                <Tool $w={34} $gap={0}>
                  <MultiLevelIcon />
                  <Caret />
                </Tool>
                <Gap $w={3} />
                <ToolRule />
                <Gap $w={3} />
                <Tool $w={25}>
                  <IndentIcon />
                </Tool>
                <Tool $w={18}>
                  <IndentIcon increase />
                </Tool>
                <Gap $w={6} />
                <ToolRule />
                <Tool $w={33}>
                  <SortIcon />
                </Tool>
                <ToolRule />
                <Tool $w={30}>
                  <Glyph $size={17} $bold $color="#3a3a3a">
                    ¶
                  </Glyph>
                </Tool>
              </ToolRow>
              <ToolRow>
                <ActiveTool $w={23} $h={22}>
                  <Lines rows={[[0, 15], [0, 10], [0, 15], [0, 10], [0, 15]]} width={15} />
                </ActiveTool>
                <Tool $w={25}>
                  <Lines rows={[[0, 15], [3, 12], [0, 15], [3, 12], [0, 15]]} width={15} />
                </Tool>
                <Tool $w={23}>
                  <Lines rows={[[0, 15], [5, 15], [0, 15], [5, 15], [0, 15]]} width={15} />
                </Tool>
                <Tool $w={21}>
                  <Lines rows={[[0, 15], [0, 15], [0, 15], [0, 15], [0, 15]]} width={15} />
                </Tool>
                <Gap $w={5} />
                <ToolRule />
                <Tool $w={40} $gap={1}>
                  <LineSpacingIcon />
                  <Caret />
                </Tool>
                <ToolRule />
                <Gap $w={6} />
                <Tool $w={30}>
                  <ShadingIcon />
                  <Caret />
                </Tool>
                <Gap $w={7} />
                <Tool $w={30} $gap={6}>
                  <BordersIcon />
                  <Caret />
                </Tool>
              </ToolRow>
            </ToolRows>
          </GroupBody>
          {groupLabel('Абзац')}
        </Group>

        <Group $w={518}>
          <GroupBody>
            <Gallery>
              <GalleryItems>
                <StyleItem $selected>
                  <Preview $selected>
                    <PreviewText $size={12}>АаБбВвГг,</PreviewText>
                  </Preview>
                  <StyleName>¶ Обычный</StyleName>
                </StyleItem>
                <StyleItem>
                  <Preview>
                    <PreviewText $size={12}>АаБбВвГг,</PreviewText>
                  </Preview>
                  <StyleName>¶ Без инте...</StyleName>
                </StyleItem>
                <StyleItem>
                  <Preview>
                    <PreviewText $f={SERIF} $size={18} $bold $color="#365f91">
                      АаБбВв
                    </PreviewText>
                  </Preview>
                  <StyleName>Заголово...</StyleName>
                </StyleItem>
                <StyleItem>
                  <Preview>
                    <PreviewText $f={SERIF} $size={15} $bold $color="#4f81bd">
                      АаБбВв
                    </PreviewText>
                  </Preview>
                  <StyleName>Заголово...</StyleName>
                </StyleItem>
                <StyleItem>
                  <Preview>
                    <PreviewText $f={SERIF} $size={33} $color="#17365d">
                      АаБ
                    </PreviewText>
                  </Preview>
                  <StyleName>Название</StyleName>
                </StyleItem>
                <StyleItem>
                  <Preview>
                    <PreviewText $f={SERIF} $size={14} $italic $ls={1} $color="#4f81bd">
                      АаБбВв.
                    </PreviewText>
                  </Preview>
                  <StyleName>Подзагол...</StyleName>
                </StyleItem>
              </GalleryItems>
              <GalleryScroll>
                <GalleryButton $faded>
                  <UpCaret />
                </GalleryButton>
                <GalleryButton>
                  <Caret $dark />
                </GalleryButton>
                <GalleryButton>
                  <BarMark />
                  <Caret $dark />
                </GalleryButton>
              </GalleryScroll>
            </Gallery>
            <ChangeStyles>
              <ChangeStylesIcon />
              <ChangeFirst>Изменить</ChangeFirst>
              <ChangeLine>
                стили
                <Caret />
              </ChangeLine>
            </ChangeStyles>
          </GroupBody>
          {groupLabel('Стили')}
        </Group>

        <Group $w={96}>
          <GroupBody>
            <ActionList $pad={9}>
              <ActionRow>
                <ActionIcon $w={19}>
                  <BinocularsIcon />
                </ActionIcon>
                Найти
                <ActionCaret>
                  <Caret />
                </ActionCaret>
              </ActionRow>
              <ActionRow>
                <ActionIcon $w={19}>
                  <ReplaceIcon />
                </ActionIcon>
                Заменить
              </ActionRow>
              <ActionRow>
                <ActionIcon $w={19}>
                  <Gap $w={3} />
                  <SelectIcon />
                </ActionIcon>
                Выделить
                <ActionCaret>
                  <Caret />
                </ActionCaret>
              </ActionRow>
            </ActionList>
          </GroupBody>
          {groupLabel('Редактирование', false)}
        </Group>
      </Ribbon>

      <Workspace>
        <LeftRail>
          <TabStopButton>
            <TabStopFace>
              <svg width="7" height="7" viewBox="0 0 7 7">
                <path d="M1 0v6h6" fill="none" stroke="#333" strokeWidth="2" />
              </svg>
            </TabStopFace>
          </TabStopButton>
          <VRulerBox>
            <VerticalRuler />
          </VRulerBox>
        </LeftRail>
        <Pane>
          <HorizontalRuler />
          <Page>
            <PageText>N33QY</PageText>
          </Page>
        </Pane>
        <ScrollRail>
          <RailGrip />
          <RulerToggle>
            <RulerToggleIcon />
          </RulerToggle>
          <RailButton $h={16}>
            <ArrowMark />
          </RailButton>
          <Track>
            <Thumb>
              <ThumbGrip />
            </Thumb>
          </Track>
          <RailButton $h={16} $line>
            <ArrowMark $down />
          </RailButton>
          <RailButton $h={17}>
            <PrevNextIcon />
          </RailButton>
          <RailButton $h={18}>
            <svg width="9" height="9" viewBox="0 0 9 9">
              <circle cx="4.500" cy="4.500" r="3.800" fill="none" stroke="#55585d" />
            </svg>
          </RailButton>
          <RailButton $h={18}>
            <PrevNextIcon down />
          </RailButton>
        </ScrollRail>
      </Workspace>

      <StatusBar>
        <StatusCell $w={105} $pad={8}>
          Страница: 1 из 1
        </StatusCell>
        <StatusCell $w={90} $pad={10}>
          Число слов: 1
        </StatusCell>
        <StatusCell $w={148} $pad={8}>
          <CheckBookIcon />
          <Gap $w={16} />
          английский (США)
        </StatusCell>
        <StatusRight>
          <StatusRule />
          <ActiveTool $w={18} $h={18}>
            <PrintLayoutIcon />
          </ActiveTool>
          <ViewSlot $w={18}>
            <ReadingIcon />
          </ViewSlot>
          <ViewSlot $w={18}>
            <WebIcon />
          </ViewSlot>
          <ViewSlot $w={18}>
            <OutlineIcon />
          </ViewSlot>
          <ViewSlot $w={19}>
            <DraftIcon />
          </ViewSlot>
          <ZoomValue>100%</ZoomValue>
          <ZoomSlider />
          <Gap $w={4} />
        </StatusRight>
      </StatusBar>
      <TaskSliver />
    </Window>
  )
}

export default App
